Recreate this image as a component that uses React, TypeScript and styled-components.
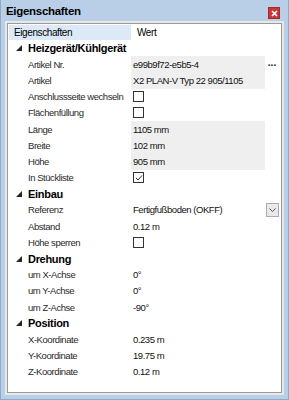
import React from "react";
import styled, { createGlobalStyle } from "styled-components";

const Global = createGlobalStyle`
  html, body { margin: 0; padding: 0; background: #fff; }
  body { font-family: "Liberation Sans", Arial, sans-serif; }
`;

type Row =
  | { kind: "group"; label: string }
  | { kind: "text"; label: string; value: string; readonly?: boolean; more?: boolean }
  | { kind: "check"; label: string; checked?: boolean }
  | { kind: "combo"; label: string; value: string };

const rows: Row[] = [
  { kind: "group", label: "Heizgerät/Kühlgerät" },
  { kind: "text", label: "Artikel Nr.", value: "e99b9f72-e5b5-4", readonly: true, more: true },
  { kind: "text", label: "Artikel", value: "X2 PLAN-V Typ 22 905/1105", readonly: true },
  { kind: "check", label: "Anschlussseite wechseln" },
  { kind: "check", label: "Flächenfüllung" },
  { kind: "text", label: "Länge", value: "1105 mm", readonly: true },
  { kind: "text", label: "Breite", value: "102 mm", readonly: true },
  { kind: "text", label: "Höhe", value: "905 mm", readonly: true },
  { kind: "check", label: "In Stückliste", checked: true },
  { kind: "group", label: "Einbau" },
  { kind: "combo", label: "Referenz", value: "Fertigfußboden (OKFF)" },
  { kind: "text", label: "Abstand", value: "0.12 m" },
  { kind: "check", label: "Höhe sperren" },
  { kind: "group", label: "Drehung" },
  { kind: "text", label: "um X-Achse", value: "0°" },
  { kind: "text", label: "um Y-Achse", value: "0°" },
  { kind: "text", label: "um Z-Achse", value: "-90°" },
  { kind: "group", label: "Position" },
  { kind: "text", label: "X-Koordinate", value: "0.235 m" },
  { kind: "text", label: "Y-Koordinate", value: "19.75 m" },
  { kind: "text", label: "Z-Koordinate", value: "0.12 m" },
];

export default function App() {
  return (
    <>
      <Global />
      <Window>
        <TitleBar>
          <Title>Eigenschaften</Title>
          <CloseButton>
            <svg width="7" height="7" viewBox="0 0 7 7">
              <path d="M1 1L6 6M6 1L1 6" stroke="#fff" strokeWidth="1.6" />
            </svg>
          </CloseButton>
        </TitleBar>
        <Frame>
          <Grid>
            <HeaderRow>
              <HeaderCell $active>Eigenschaften</HeaderCell>
              <HeaderCell>Wert</HeaderCell>
            </HeaderRow>
            {rows.map((r, i) =>
              r.kind === "group" ? (
                <GroupRow key={i}>
                  <Arrow>
                    <svg width="6" height="6" viewBox="0 0 6 6">
                      <path d="M6 0L6 6L0 6Z" fill="#262626" />
                    </svg>
                  </Arrow>
                  <GroupLabel>{r.label}</GroupLabel>
                </GroupRow>
              ) : (
                <PropRow key={i}>
                  <Label>{r.label}</Label>
                  {r.kind === "text" && (
                    <>
                      <Value $readonly={r.readonly}>{r.value}</Value>
                      <Side>{r.more && <More>...</More>}</Side>
                    </>
                  )}
                  {r.kind === "check" && (
                    <>
                      <Value>
                        <Check>
                          {r.checked && (
                            <svg width="8" height="8" viewBox="0 0 8 8">
                              <path d="M1 4L3 6L7 1.5" stroke="#333" strokeWidth="1" fill="none" />
                            </svg>
                          )}
                        </Check>
                      </Value>
                      <Side />
                    </>
                  )}
                  {r.kind === "combo" && (
                    <>
                      <Value>{r.value}</Value>
                      <Side>
                        <DropButton>
                          <svg width="7" height="4" viewBox="0 0 7 4">
                            <path d="M0.5 0.5L3.5 3.5L6.5 0.5" stroke="#555" fill="none" />
                          </svg>
                        </DropButton>
                      </Side>
                    </>
                  )}
                </PropRow>
              )
            )}
          </Grid>
        </Frame>
      </Window>
    </>
  );
}

const Window = styled.div`
  width: 289px;
  height: 400px;
  box-sizing: border-box;
  background: #b9cfe7;
  border-left: 1px solid #8fa9c8;
  border-right: 1px solid #8fa9c8;
  border-bottom: 1px solid #8fa9c8;
  display: flex;
  flex-direction: column;
  padding: 0 4px 4px 3px;
`;

const TitleBar = styled.div`
  height: 22px;
  display: flex;
  align-items: center;
  justify-content: space-between;
  padding: 0 4px 0 2px;
`;

const Title = styled.div`
  font-weight: bold;
  font-size: 11.5px;
  color: #000;
  letter-spacing: -0.3px;
`;

const CloseButton = styled.div`
  width: 12px;
  height: 12px;
  background: #c7373a;
  border: 1px solid #a02a2c;
  box-sizing: border-box;
  display: flex;
  align-items: center;
  justify-content: center;
  margin-top: 4px;
`;

const Frame = styled.div`
  flex: 1;
  background: #fff;
  border: 1px solid #9a9a9a;
  box-shadow: 0 0 0 2px #e8e8e8;
  margin: 1px 2px 2px 3px;
  padding: 1px 2px 0 1px;
`;

const Grid = styled.div`
  display: flex;
  flex-direction: column;
  font-size: 9.5px;
  letter-spacing: -0.45px;
  color: #1a1a1a;
`;

const HeaderRow = styled.div`
  display: grid;
  grid-template-columns: 122px 1fr;
  height: 15px;
`;

const HeaderCell = styled.div<{ $active?: boolean }>`
  background: ${(p) => (p.$active ? "#dbeaf6" : "#fff")};
  padding-left: ${(p) => (p.$active ? "5px" : "6px")};
  display: flex;
  align-items: center;
  color: #000;
  font-size: 10px;
  letter-spacing: -0.4px;
`;

const GroupRow = styled.div`
  height: 16.2px;
  display: flex;
  align-items: center;
`;

const Arrow = styled.div`
  width: 19px;
  padding-left: 7px;
  box-sizing: border-box;
  display: flex;
  align-items: center;
`;

const GroupLabel = styled.div`
  font-weight: bold;
  font-size: 11px;
  letter-spacing: -0.3px;
  color: #000;
`;

const PropRow = styled.div`
  height: 16.2px;
  display: grid;
  grid-template-columns: 122px 1fr 14px;
  align-items: stretch;
`;

const Label = styled.div`
  padding-left: 19px;
  display: flex;
  align-items: center;
  color: #2a2a2a;
  white-space: nowrap;
`;

const Value = styled.div<{ $readonly?: boolean }>`
  background: ${(p) => (p.$readonly ? "#efefef" : "#fff")};
  padding-left: 2px;
  display: flex;
  align-items: center;
  white-space: nowrap;
  color: #111;
`;

const Side = styled.div`
  display: flex;
  align-items: center;
  justify-content: center;
`;

const More = styled.div`
  font-weight: bold;
  font-size: 10px;
  letter-spacing: 0;
  margin-top: -4px;
`;

const Check = styled.div`
  width: 11px;
  height: 11px;
  box-sizing: border-box;
  border: 1px solid #333;
  background: #fff;
  display: flex;
  align-items: center;
  justify-content: center;
`;

const DropButton = styled.div`
  width: 13px;
  height: 14px;
  box-sizing: border-box;
  border: 1px solid #adadad;
  background: #e9e9e9;
  display: flex;
  align-items: center;
  justify-content: center;
`;
